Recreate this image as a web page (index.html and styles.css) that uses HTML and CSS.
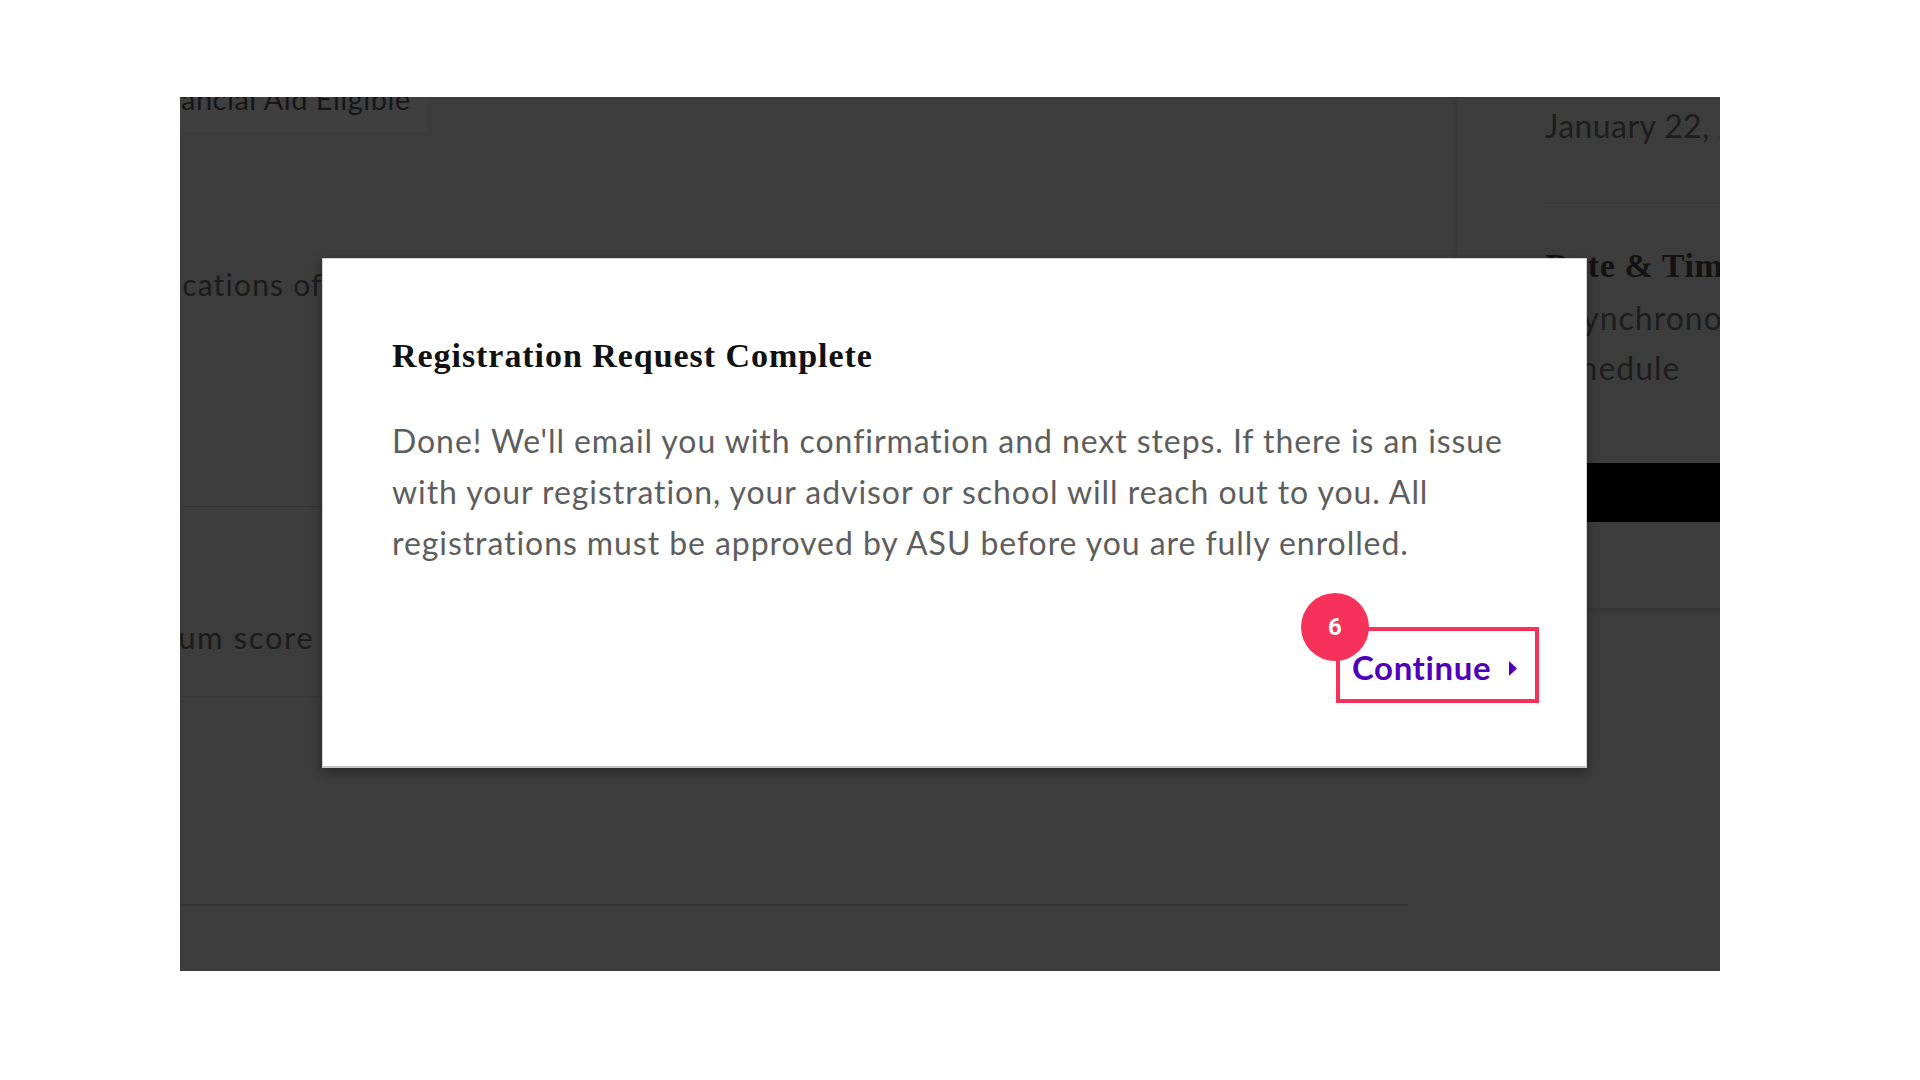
FILE: index.html
```html
<!DOCTYPE html>
<html lang="en">
<head>
<meta charset="utf-8">
<title>Registration Request Complete</title>
<link rel="stylesheet" href="styles.css">
</head>
<body>
<div class="screen">
  <div class="main-col">
    <div class="chip">Financial Aid Eligible</div>
    <p class="bg-text qual">Applications of</p>
    <hr class="rule rule-a">
    <p class="bg-text score">Minimum score</p>
    <hr class="rule rule-b">
    <hr class="rule rule-c">
  </div>
  <aside class="side-col">
    <div class="side-card">
      <div class="side-date">January 22, 2024</div>
      <hr class="side-rule">
      <h3 class="side-heading">Date &amp; Time</h3>
      <p class="side-text">Asynchronous<br>Schedule</p>
      <div class="side-bar"></div>
    </div>
  </aside>

  <div class="modal" role="dialog" aria-labelledby="modal-title">
    <h2 class="modal-title" id="modal-title">Registration Request Complete</h2>
    <p class="modal-body">Done! We'll email you with confirmation and next steps. If there is an issue<br>with your registration, your advisor or school will reach out to you. All<br>registrations must be approved by ASU before you are fully enrolled.</p>
    <div class="modal-footer">
      <button class="continue-btn" type="button">
        <span class="step-badge">6</span>
        <span class="continue-label">Continue</span>
        <svg class="caret" width="8" height="15" viewBox="0 0 8 15" aria-hidden="true"><path d="M0 0 L8 7.5 L0 15 Z" fill="#5000b9"/></svg>
      </button>
    </div>
  </div>
</div>
</body>
</html>
```

FILE: styles.css
```css
html, body {
  margin: 0;
  background: #ffffff;
}

body {
  padding: 97px 0 0 180px;
  font-family: "Lato", "Liberation Sans", sans-serif;
}

.screen {
  position: relative;
  width: 1540px;
  height: 874px;
  overflow: hidden;
  background: #3c3c3c;
  display: grid;
  grid-template-columns: 1275px 1fr;
  align-items: start;
}

/* ---------- dimmed background page ---------- */
.main-col {
  display: flex;
  flex-direction: column;
  align-items: flex-start;
}

.chip {
  margin: -22px 0 0 -56px;
  padding: 8px 16px 17px 16px;
  background: #3f3f3f;
  color: #161616;
  font-size: 29px;
  line-height: 32px;
  letter-spacing: 0.5px;
}

.bg-text {
  margin: 0;
  color: #1b1b1b;
  font-size: 30px;
  line-height: 40px;
  white-space: nowrap;
}

.qual {
  margin-top: 132px;
  margin-left: -72px;
  letter-spacing: 1.2px;
}

.rule {
  border: 0;
  height: 1px;
  background: #343434;
  margin: 0;
  width: 1228px;
}

.rule-a { margin-top: 202px; }

.score {
  margin-top: 110px;
  margin-left: -96px;
  font-size: 31px;
  letter-spacing: 1.6px;
}

.rule-b { margin-top: 39px; }
.rule-c { margin-top: 207px; height: 2px; }

.side-card {
  padding: 9px 0 86px 88px;
  border-left: 2px solid #383838;
  border-bottom: 1px solid #363636;
  box-shadow: 0 2px 4px rgba(0, 0, 0, 0.15);
}

.side-date {
  color: #1d1d1d;
  font-size: 32px;
  line-height: 40px;
  letter-spacing: 0.4px;
  white-space: nowrap;
}

.side-rule {
  border: 0;
  height: 1px;
  background: #353535;
  margin: 57px 0 0;
}

.side-heading {
  margin: 42px 0 0;
  font-family: "Liberation Serif", serif;
  font-weight: 700;
  font-size: 34px;
  line-height: 40px;
  letter-spacing: 0.6px;
  color: #121212;
  white-space: nowrap;
}

.side-text {
  margin: 7px 0 0;
  color: #1d1d1d;
  font-size: 32px;
  line-height: 50px;
  letter-spacing: 1px;
  white-space: nowrap;
}

.side-bar {
  margin-top: 70px;
  height: 59px;
  background: #000000;
}

/* ---------- modal ---------- */
.modal {
  position: absolute;
  left: 142px;
  top: 161px;
  width: 1265px;
  height: 510px;
  box-sizing: border-box;
  background: #ffffff;
  border: 1px solid #d2d2d2;
  border-bottom: 2px solid #c6c6c6;
  box-shadow: 0 4px 10px rgba(0, 0, 0, 0.35);
  padding: 77px 47px 63px 69px;
  display: flex;
  flex-direction: column;
}

.modal-title {
  margin: 0;
  font-family: "Liberation Serif", "Times New Roman", serif;
  font-weight: 700;
  font-size: 34px;
  line-height: 40px;
  letter-spacing: 0.95px;
  color: #111111;
}

.modal-body {
  margin: 39px 0 0;
  font-family: "Lato", "Liberation Sans", sans-serif;
  font-size: 32px;
  line-height: 51px;
  letter-spacing: 0.93px;
  color: #5e5e5e;
}

.modal-footer {
  margin-top: auto;
  display: flex;
  justify-content: flex-end;
}

.continue-btn {
  position: relative;
  width: 203px;
  height: 76px;
  box-sizing: border-box;
  border: 4px solid #f7325a;
  background: #ffffff;
  padding: 3px 18px 0 12px;
  display: flex;
  align-items: center;
  cursor: pointer;
}

.continue-label {
  font-family: "Lato", "Liberation Sans", sans-serif;
  font-weight: 700;
  font-size: 33px;
  line-height: 38px;
  color: #5000b9;
  letter-spacing: 0.6px;
}

.caret {
  margin-left: auto;
  margin-top: 4px;
  display: block;
}

.step-badge {
  position: absolute;
  left: -39px;
  top: -38px;
  width: 68px;
  height: 68px;
  border-radius: 50%;
  background: #f7325a;
  color: #ffffff;
  font-family: "Roboto", "Liberation Sans", sans-serif;
  font-weight: 700;
  font-size: 24px;
  display: flex;
  align-items: center;
  justify-content: center;
}
```
